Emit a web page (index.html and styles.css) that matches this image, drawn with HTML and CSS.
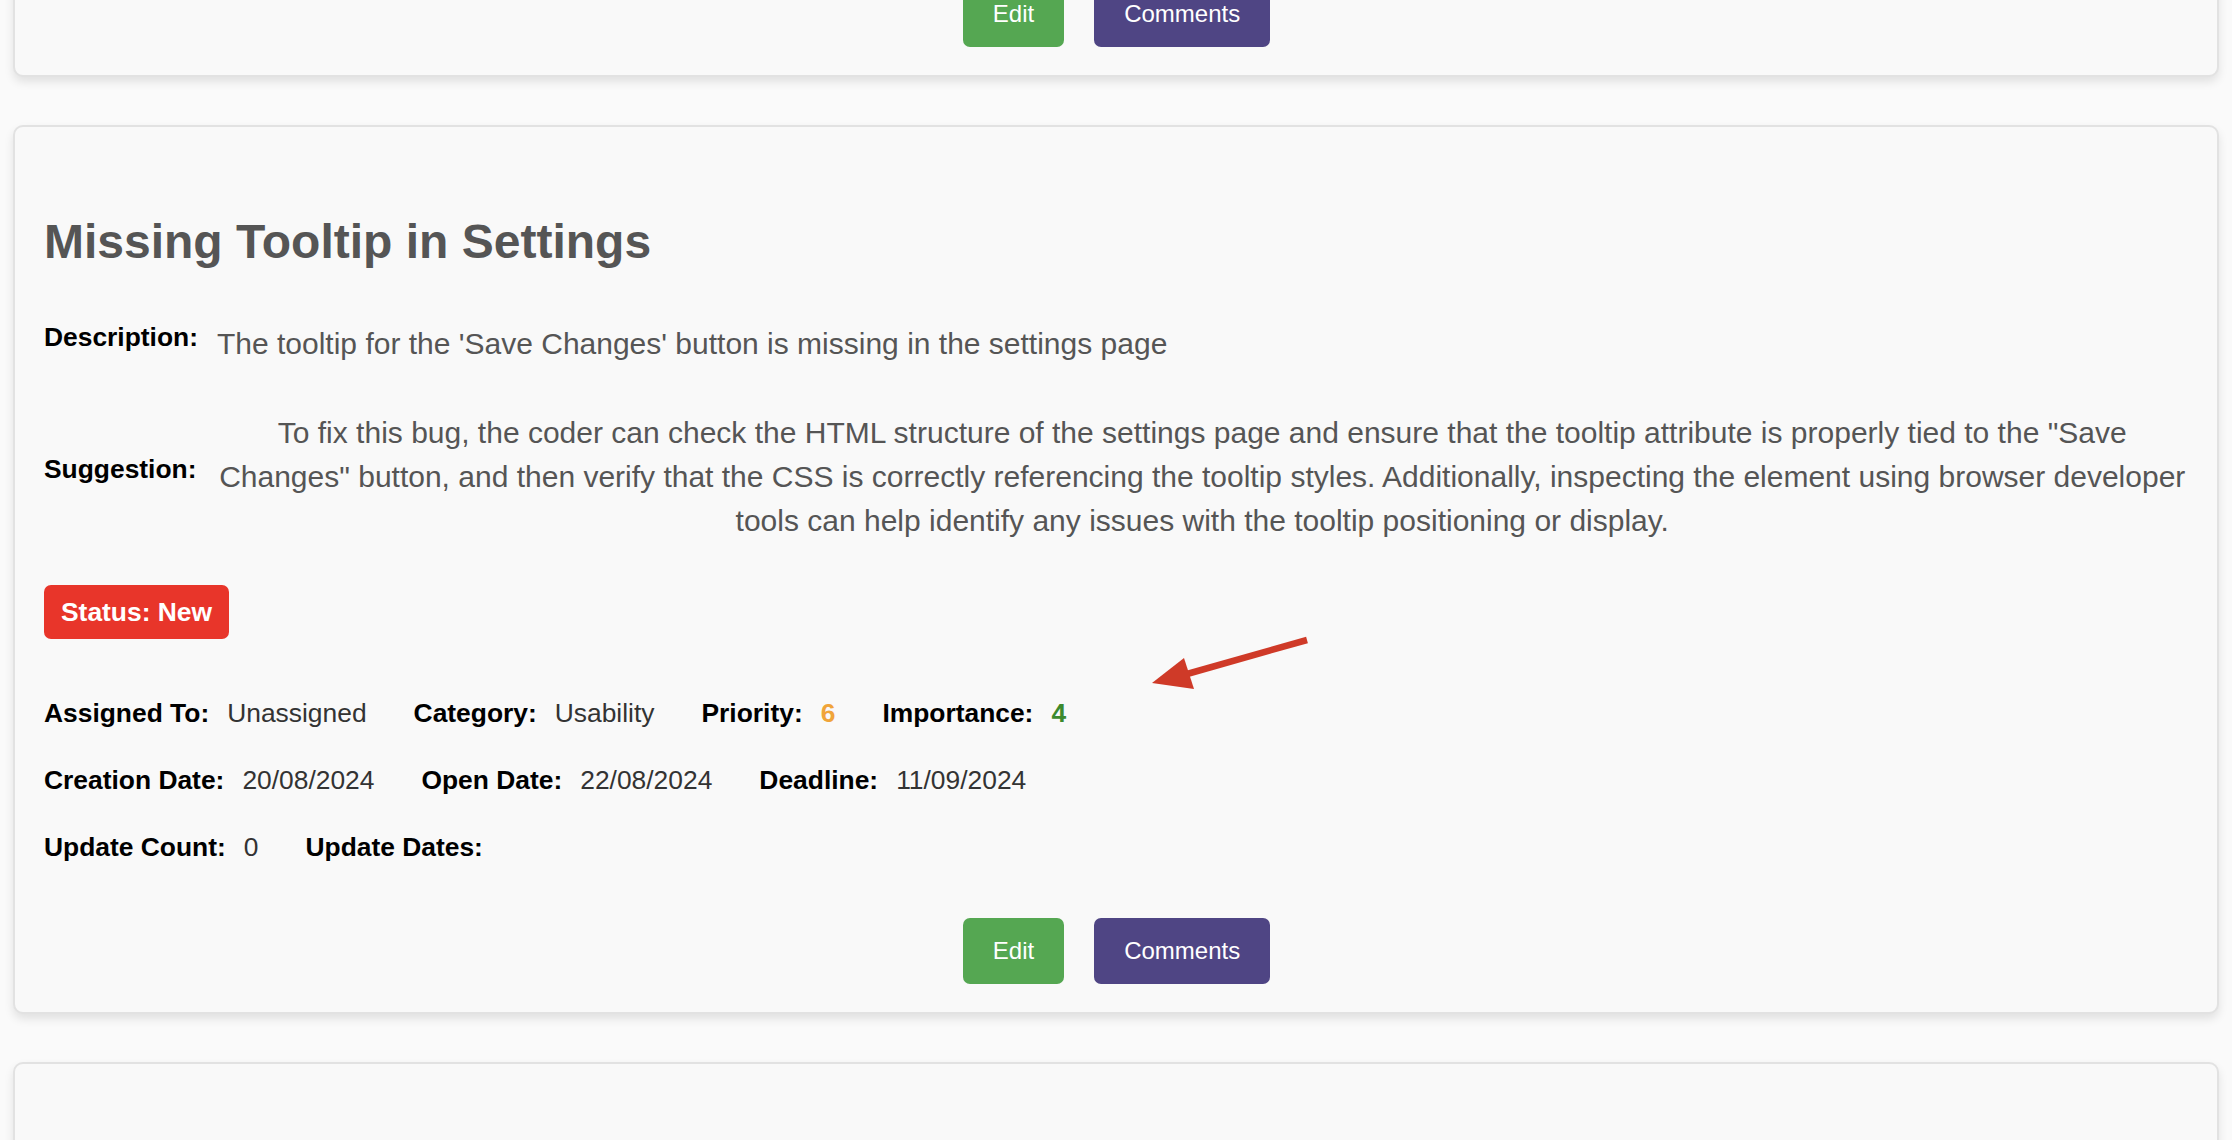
FILE: index.html
```html
<!DOCTYPE html>
<html lang="en">
<head>
<meta charset="utf-8">
<title>Bug list</title>
<link rel="stylesheet" href="styles.css">
</head>
<body>
<div class="list">
  <div class="card card-partial">
    <div class="actions">
      <button class="btn btn-edit">Edit</button>
      <button class="btn btn-comments">Comments</button>
    </div>
  </div>

  <div class="card">
    <h1 class="bug-title">Missing Tooltip in Settings</h1>

    <div class="field field-desc">
      <span class="field-label">Description:</span>
      <p class="field-text">The tooltip for the 'Save Changes' button is missing in the settings page</p>
    </div>

    <div class="field field-sugg">
      <span class="field-label">Suggestion:</span>
      <p class="field-text">To fix this bug, the coder can check the HTML structure of the settings page and ensure that the tooltip attribute is properly tied to the "Save Changes" button, and then verify that the CSS is correctly referencing the tooltip styles. Additionally, inspecting the element using browser developer tools can help identify any issues with the tooltip positioning or display.</p>
    </div>

    <div class="status">Status: New</div>

    <div class="meta">
      <div class="meta-row">
        <div class="meta-item"><span class="meta-label">Assigned To:</span><span class="meta-value">Unassigned</span></div>
        <div class="meta-item"><span class="meta-label">Category:</span><span class="meta-value">Usability</span></div>
        <div class="meta-item"><span class="meta-label">Priority:</span><span class="meta-value priority">6</span></div>
        <div class="meta-item"><span class="meta-label">Importance:</span><span class="meta-value importance">4</span></div>
      </div>
      <div class="meta-row">
        <div class="meta-item"><span class="meta-label">Creation Date:</span><span class="meta-value">20/08/2024</span></div>
        <div class="meta-item"><span class="meta-label">Open Date:</span><span class="meta-value">22/08/2024</span></div>
        <div class="meta-item"><span class="meta-label">Deadline:</span><span class="meta-value">11/09/2024</span></div>
      </div>
      <div class="meta-row">
        <div class="meta-item"><span class="meta-label">Update Count:</span><span class="meta-value">0</span></div>
        <div class="meta-item"><span class="meta-label">Update Dates:</span><span class="meta-value"></span></div>
      </div>
    </div>

    <div class="actions">
      <button class="btn btn-edit">Edit</button>
      <button class="btn btn-comments">Comments</button>
    </div>

    <svg class="annot-arrow" width="180" height="70" viewBox="0 0 180 70" aria-hidden="true">
      <line x1="168" y1="10" x2="48" y2="44" stroke="#cf3a28" stroke-width="6.5" stroke-linecap="butt"/>
      <polygon points="13,53 45,28 55,59" fill="#cf3a28"/>
    </svg>
  </div>

  <div class="card card-next"></div>
</div>
</body>
</html>
```

FILE: styles.css
```css
* {
  box-sizing: border-box;
}

html, body {
  margin: 0;
  padding: 0;
}

body {
  background: #fafafa;
  font-family: "Liberation Sans", Arial, Helvetica, sans-serif;
  color: #333;
  overflow: hidden;
  height: 1140px;
}

.list {
  display: flex;
  flex-direction: column;
  gap: 48px;
  margin: -51px 13px 0 13px;
}

.card {
  position: relative;
  background: #f9f9f9;
  border: 2px solid #e2e2e2;
  border-radius: 10px;
  box-shadow: 0 5px 10px rgba(0, 0, 0, 0.1);
  padding: 30px 28px 28px 29px;
}

.card-next {
  height: 400px;
}

.bug-title {
  margin: 57px 0 0 0;
  font-size: 48px;
  line-height: 55px;
  font-weight: 700;
  color: #555;
}

.field {
  display: flex;
  gap: 19px;
}

.field-desc {
  margin-top: 53px;
  align-items: flex-start;
}

.field-sugg {
  margin-top: 45px;
  align-items: center;
}

.field-label {
  flex: none;
  font-size: 26.4px;
  line-height: 30px;
  font-weight: 700;
  color: #000;
}

.field-sugg .field-label {
  margin-bottom: 16px;
}

.field-text {
  margin: 0;
  font-size: 30px;
  line-height: 44px;
  color: #555;
  text-align: center;
}

.status {
  align-self: flex-start;
  display: inline-block;
  margin-top: 42px;
  padding: 12px 17px;
  background: #e8352a;
  color: #fff;
  font-size: 26.4px;
  line-height: 30px;
  font-weight: 700;
  border-radius: 7px;
}

.meta {
  margin-top: 59px;
  display: flex;
  flex-direction: column;
  gap: 37px;
}

.meta-row {
  display: flex;
  gap: 47px;
}

.meta-item {
  display: flex;
  gap: 18px;
  font-size: 26.4px;
  line-height: 30px;
}

.meta-label {
  font-weight: 700;
  color: #000;
}

.meta-value {
  color: #333;
}

.priority {
  color: #f0a43a;
  font-weight: 700;
}

.importance {
  color: #3c8a2e;
  font-weight: 700;
}

.actions {
  display: flex;
  justify-content: center;
  gap: 30px;
  margin-top: 56px;
}

.card-partial .actions {
  margin-top: 0;
}

.btn {
  border: none;
  border-radius: 7px;
  padding: 19px 30px;
  font-family: "Liberation Sans", Arial, Helvetica, sans-serif;
  font-size: 24px;
  line-height: 28px;
  color: #fff;
  cursor: pointer;
}

.btn-edit {
  background: #55a752;
}

.btn-comments {
  background: #4f4584;
}

.annot-arrow {
  position: absolute;
  left: 1124px;
  top: 503px;
}
```
